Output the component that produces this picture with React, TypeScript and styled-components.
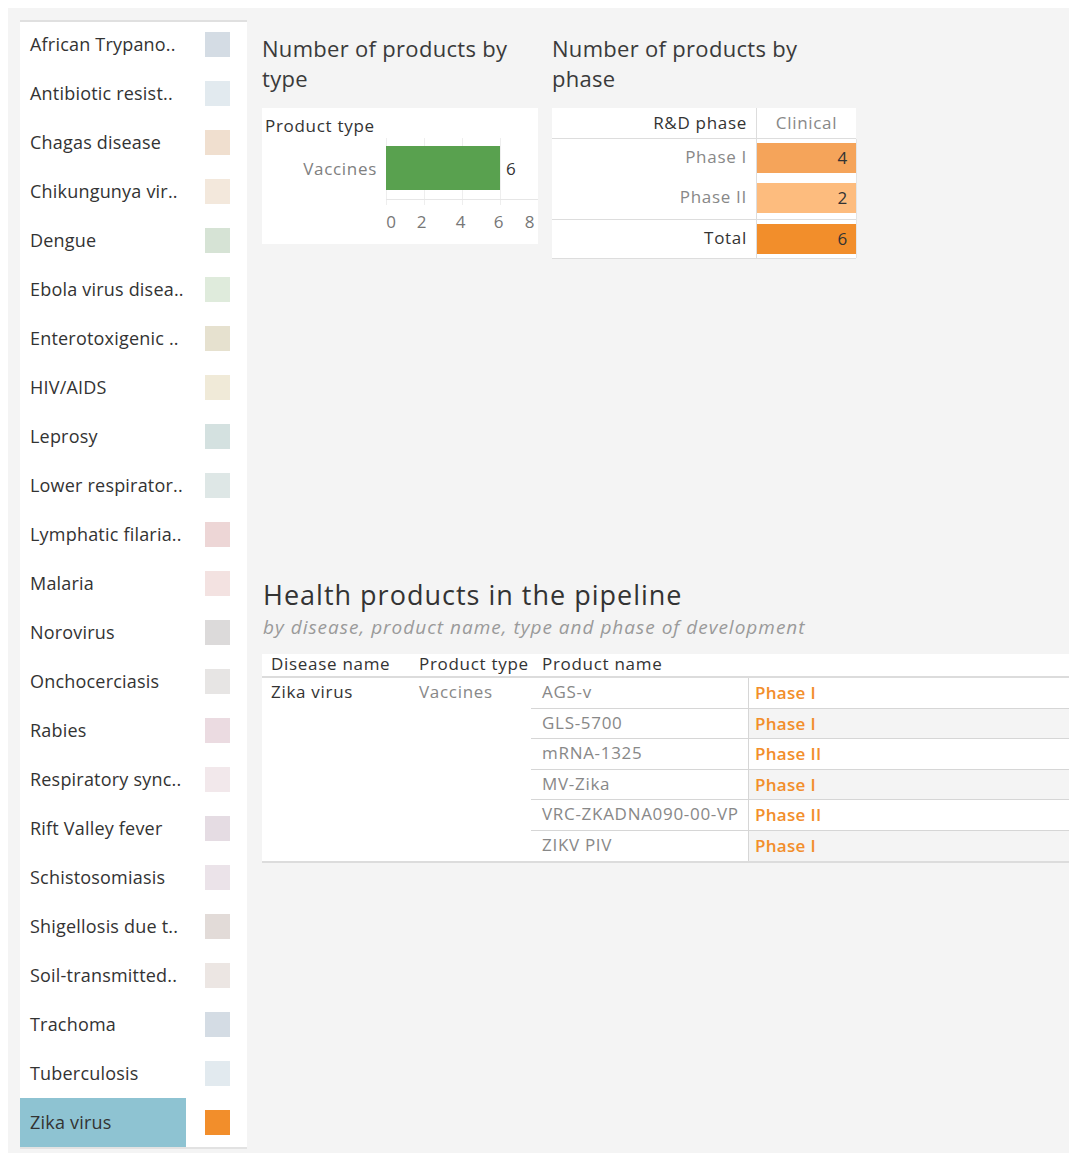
import styled, { createGlobalStyle } from 'styled-components'

const GlobalStyle = createGlobalStyle`
    html, body {
        margin: 0;
        overflow: hidden;
    }
    body {
        background: #ffffff;
        font-family: 'Open Sans', 'Noto Sans', 'Liberation Sans', sans-serif;
        color: #333333;
    }
`

// Tableau 20 palette, faded for the legend entries that are not selected
const fade = (hex: string, alpha = 0.17, base = 240) => {
    const n = parseInt(hex.slice(1), 16)
    const mix = (c: number) => Math.round(c * alpha + base * (1 - alpha))
    return `rgb(${mix((n >> 16) & 255)}, ${mix((n >> 8) & 255)}, ${mix(n & 255)})`
}

const diseases = [
    { name: 'African Trypano..', color: '#4e79a7' },
    { name: 'Antibiotic resist..', color: '#a0cbe8' },
    { name: 'Chagas disease', color: '#f28e2b' },
    { name: 'Chikungunya vir..', color: '#ffbe7d' },
    { name: 'Dengue', color: '#59a14f' },
    { name: 'Ebola virus disea..', color: '#8cd17d' },
    { name: 'Enterotoxigenic ..', color: '#b6992d' },
    { name: 'HIV/AIDS', color: '#f1ce63' },
    { name: 'Leprosy', color: '#499894' },
    { name: 'Lower respirator..', color: '#86bcb6' },
    { name: 'Lymphatic filaria..', color: '#e15759' },
    { name: 'Malaria', color: '#ff9d9a' },
    { name: 'Norovirus', color: '#79706e' },
    { name: 'Onchocerciasis', color: '#bab0ac' },
    { name: 'Rabies', color: '#d37295' },
    { name: 'Respiratory sync..', color: '#fabfd2' },
    { name: 'Rift Valley fever', color: '#b07aa1' },
    { name: 'Schistosomiasis', color: '#d4a6c8' },
    { name: 'Shigellosis due t..', color: '#9d7660' },
    { name: 'Soil-transmitted..', color: '#d7b5a6' },
    { name: 'Trachoma', color: '#4e79a7' },
    { name: 'Tuberculosis', color: '#a0cbe8' },
    { name: 'Zika virus', color: '#f28e2b', selected: true },
]

const products = [
    { name: 'AGS-v', phase: 'Phase I' },
    { name: 'GLS-5700', phase: 'Phase I' },
    { name: 'mRNA-1325', phase: 'Phase II' },
    { name: 'MV-Zika', phase: 'Phase I' },
    { name: 'VRC-ZKADNA090-00-VP', phase: 'Phase II' },
    { name: 'ZIKV PIV', phase: 'Phase I' },
]

const Page = styled.div`
    padding: 8px 0 0 8px;
`

const Canvas = styled.div`
    display: flex;
    gap: 15px;
    min-height: 1145px;
    box-sizing: border-box;
    padding: 12px 0 0 12px;
    background: #f4f4f4;
`

const Legend = styled.div`
    width: 227px;
    flex-shrink: 0;
    align-self: flex-start;
    background: #ffffff;
    box-shadow: inset 0 2px 0 #e0e0e0, 0 2px 0 #e2e2e2;
`

const LegendRow = styled.div`
    display: flex;
    align-items: center;
    height: 49px;
`

const LegendLabel = styled.div<{ $selected?: boolean }>`
    width: 166px;
    height: 100%;
    box-sizing: border-box;
    padding: 0 0 2px 10px;
    display: flex;
    align-items: center;
    font-size: 18px;
    letter-spacing: 0.2px;
    color: #333333;
    white-space: nowrap;
    background: ${(p) => (p.$selected ? '#8ec3d2' : 'transparent')};
`

const Swatch = styled.div<{ $color: string }>`
    width: 25px;
    height: 25px;
    margin-left: 19px;
    background: ${(p) => p.$color};
`

const Main = styled.div`
    flex: 1;
    min-width: 0;
    display: flex;
    flex-direction: column;
    font-size: 17px;
    letter-spacing: 0.7px;
`

const ChartRow = styled.div`
    display: flex;
    gap: 14px;
    margin-top: 13px;
`

const ChartBlock = styled.div<{ $width: number }>`
    width: ${(p) => p.$width}px;
`

const ChartTitle = styled.div`
    max-width: 265px;
    font-size: 22px;
    letter-spacing: 0.3px;
    line-height: 30px;
    color: #3a3a3a;
    margin-bottom: 15px;
`

const Panel = styled.div`
    background: #ffffff;
`

const TypeHeader = styled.div`
    height: 30px;
    box-sizing: border-box;
    padding: 7px 0 0 3px;
    line-height: 22px;
    color: #333333;
`

const PlotRow = styled.div`
    display: flex;
    height: 106px;
`

const TypeLabel = styled.div`
    width: 124px;
    height: 61px;
    box-sizing: border-box;
    padding-right: 9px;
    display: flex;
    align-items: center;
    justify-content: flex-end;
    color: #808080;
`

const PhaseGrid = styled.div`
    display: grid;
    grid-template-columns: 204px 100px;
    background: #ffffff;
    box-shadow: 0 1px 0 #dddddd;
`

const PhaseHead = styled.div<{ $center?: boolean; $muted?: boolean }>`
    height: 30px;
    line-height: 29px;
    border-bottom: 1px solid #dddddd;
    border-left: ${(p) => (p.$center ? '1px solid #dddddd' : 'none')};
    text-align: ${(p) => (p.$center ? 'center' : 'right')};
    padding-right: ${(p) => (p.$center ? 0 : 9)}px;
    color: ${(p) => (p.$muted ? '#888888' : '#333333')};
`

const PhaseLabel = styled.div<{ $strong?: boolean; $h: number; $line?: boolean }>`
    height: ${(p) => p.$h}px;
    box-sizing: border-box;
    padding: 3px 9px 0 0;
    line-height: 30px;
    text-align: right;
    color: ${(p) => (p.$strong ? '#333333' : '#888888')};
    border-bottom: ${(p) => (p.$line ? '1px solid #dddddd' : 'none')};
`

const PhaseCell = styled.div<{ $h: number; $line?: boolean }>`
    height: ${(p) => p.$h}px;
    box-sizing: border-box;
    padding-top: 4px;
    border-left: 1px solid #dddddd;
    border-bottom: ${(p) => (p.$line ? '1px solid #dddddd' : 'none')};
    box-shadow: 1px 0 0 #e4e4e4;
`

const PhaseBar = styled.div<{ $color: string }>`
    height: 30px;
    line-height: 29px;
    padding-right: 8px;
    text-align: right;
    color: #333333;
    background: ${(p) => p.$color};
`

const Pipeline = styled.div`
    margin-top: 320px;
`

const Heading = styled.div`
    font-size: 27px;
    letter-spacing: 1px;
    line-height: 34px;
    color: #333333;
    padding-left: 1px;
`

const Subheading = styled.div`
    margin-top: 2px;
    font-size: 19px;
    letter-spacing: 1px;
    line-height: 26px;
    font-style: italic;
    color: #9a9a9a;
    padding-left: 1px;
`

const Table = styled.div`
    margin-top: 14px;
    display: grid;
    grid-template-columns: 148px 121px 217px 1fr;
    background: #ffffff;
    border-bottom: 2px solid #dcdcdc;
`

const HeadCell = styled.div<{ $pad: number }>`
    height: 22px;
    line-height: 20px;
    padding-left: ${(p) => p.$pad}px;
    color: #333333;
    border-bottom: 2px solid #dcdcdc;
    white-space: nowrap;
`

const SpanCell = styled.div<{ $col: number; $muted?: boolean }>`
    grid-column: ${(p) => p.$col};
    grid-row: 2 / span 6;
    padding-left: 9px;
    line-height: 28px;
    color: ${(p) => (p.$muted ? '#888888' : '#333333')};
`

const NameCell = styled.div<{ $last?: boolean }>`
    grid-column: 3;
    height: 29.6px;
    line-height: 27px;
    padding-left: 11px;
    color: #888888;
    white-space: nowrap;
    border-bottom: ${(p) => (p.$last ? 'none' : '1px solid #d6d6d6')};
`

const StageCell = styled.div<{ $shade?: boolean; $last?: boolean }>`
    height: 29.6px;
    line-height: 30px;
    padding-left: 6px;
    font-weight: 600;
    letter-spacing: 0.3px;
    color: #f28e2b;
    background: ${(p) => (p.$shade ? '#f4f4f4' : '#ffffff')};
    border-left: 1px solid #d6d6d6;
    border-bottom: ${(p) => (p.$last ? 'none' : '1px solid #d6d6d6')};
`

const TypeChart = () => (
    <svg width="152" height="106" viewBox="0 0 152 106">
        {[0, 38, 76, 114].map((x) => (
            <line key={x} x1={x + 0.5} y1={0} x2={x + 0.5} y2={67} stroke="#eeeeee" />
        ))}
        <rect x={0} y={8} width={114} height={44} fill="#59a14f" />
        <text x={120} y={37} fontSize="17" fill="#333333" fontFamily="Open Sans">
            6
        </text>
        <line x1={0} y1={61.5} x2={152} y2={61.5} stroke="#e6e6e6" />
        {[
            { v: '0', x: 5.5 },
            { v: '2', x: 36 },
            { v: '4', x: 75 },
            { v: '6', x: 113 },
            { v: '8', x: 144 },
        ].map((t) => (
            <text key={t.v} x={t.x} y={90} fontSize="17" fill="#777777" textAnchor="middle" fontFamily="Open Sans">
                {t.v}
            </text>
        ))}
    </svg>
)

export default function App() {
    return (
        <Page>
            <GlobalStyle />
            <Canvas>
                <Legend>
                    {diseases.map((d) => (
                        <LegendRow key={d.name}>
                            <LegendLabel $selected={d.selected}>{d.name}</LegendLabel>
                            <Swatch $color={d.selected ? d.color : fade(d.color)} />
                        </LegendRow>
                    ))}
                </Legend>

                <Main>
                    <ChartRow>
                        <ChartBlock $width={276}>
                            <ChartTitle>Number of products by type</ChartTitle>
                            <Panel>
                                <TypeHeader>Product type</TypeHeader>
                                <PlotRow>
                                    <TypeLabel>Vaccines</TypeLabel>
                                    <TypeChart />
                                </PlotRow>
                            </Panel>
                        </ChartBlock>

                        <ChartBlock $width={304}>
                            <ChartTitle>Number of products by phase</ChartTitle>
                            <PhaseGrid>
                                <PhaseHead>R&amp;D phase</PhaseHead>
                                <PhaseHead $center $muted>
                                    Clinical
                                </PhaseHead>
                                <PhaseLabel $h={40}>Phase I</PhaseLabel>
                                <PhaseCell $h={40}>
                                    <PhaseBar $color="#f5a45a">4</PhaseBar>
                                </PhaseCell>
                                <PhaseLabel $h={41} $line>
                                    Phase II
                                </PhaseLabel>
                                <PhaseCell $h={41} $line>
                                    <PhaseBar $color="#fdbc7e">2</PhaseBar>
                                </PhaseCell>
                                <PhaseLabel $h={38} $strong>
                                    Total
                                </PhaseLabel>
                                <PhaseCell $h={38}>
                                    <PhaseBar $color="#f28e2b">6</PhaseBar>
                                </PhaseCell>
                            </PhaseGrid>
                        </ChartBlock>
                    </ChartRow>

                    <Pipeline>
                        <Heading>Health products in the pipeline</Heading>
                        <Subheading>by disease, product name, type and phase of development</Subheading>
                        <Table>
                            <HeadCell $pad={9}>Disease name</HeadCell>
                            <HeadCell $pad={9}>Product type</HeadCell>
                            <HeadCell $pad={11}>Product name</HeadCell>
                            <HeadCell $pad={6} />
                            <SpanCell $col={1}>Zika virus</SpanCell>
                            <SpanCell $col={2} $muted>
                                Vaccines
                            </SpanCell>
                            {products.flatMap((p, i) => [
                                <NameCell key={p.name} $last={i === products.length - 1}>
                                    {p.name}
                                </NameCell>,
                                <StageCell key={p.name + '-phase'} $shade={i % 2 === 1} $last={i === products.length - 1}>
                                    {p.phase}
                                </StageCell>,
                            ])}
                        </Table>
                    </Pipeline>
                </Main>
            </Canvas>
        </Page>
    )
}
